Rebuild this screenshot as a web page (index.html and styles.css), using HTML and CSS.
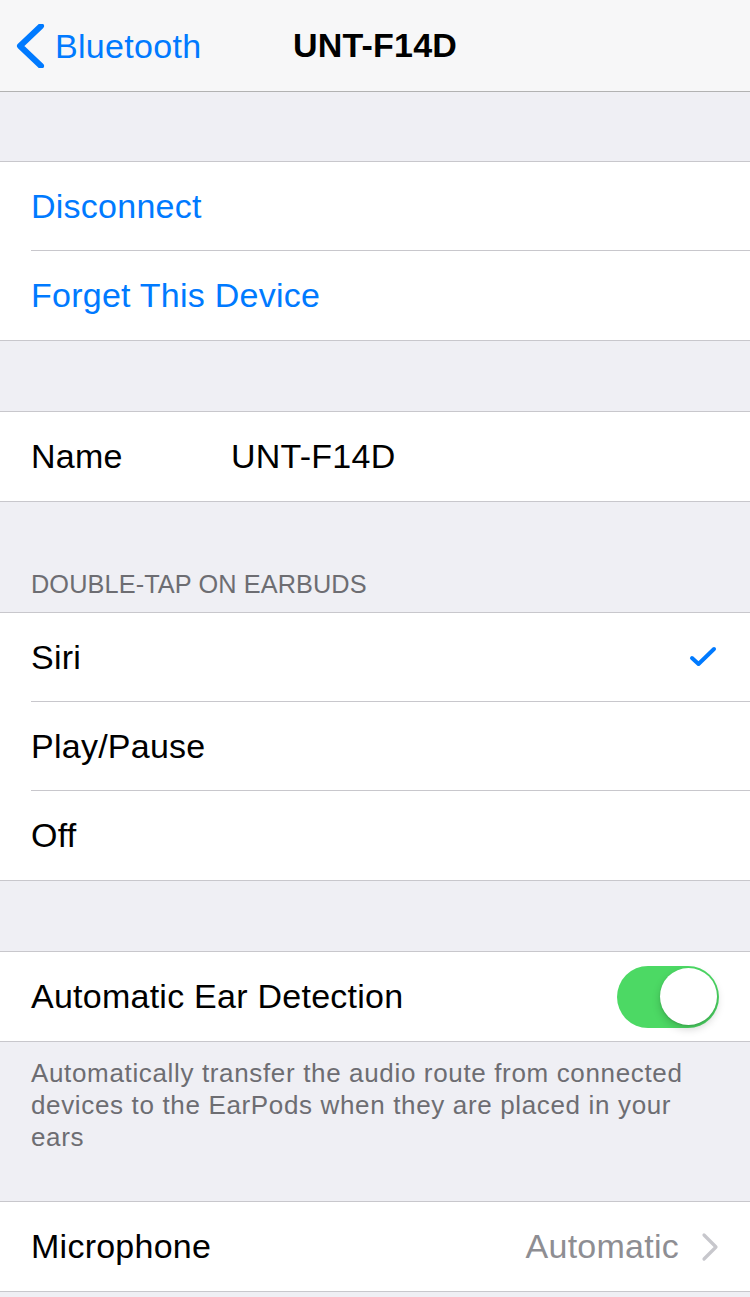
FILE: index.html
```html
<!DOCTYPE html>
<html>
<head>
<meta charset="utf-8">
<link rel="stylesheet" href="styles.css">
</head>
<body>
<header class="nav">
  <div class="nav-left">
    <svg class="back-icon" width="30" height="44" viewBox="0 0 30 44"><polyline points="26,2 5,22 26,42" fill="none" stroke="#007aff" stroke-width="6" stroke-linecap="round" stroke-linejoin="round"/></svg>
    <span class="back-label">Bluetooth</span>
  </div>
  <div class="nav-title">UNT-F14D</div>
  <div class="nav-right"></div>
</header>

<div class="gap first"></div>
<section class="group">
  <div class="row"><span class="link">Disconnect</span></div>
  <div class="row"><span class="link">Forget This Device</span></div>
</section>

<div class="gap"></div>
<section class="group">
  <div class="row"><span class="label">Name</span><span class="value-black">UNT-F14D</span></div>
</section>

<div class="section-header">DOUBLE-TAP ON EARBUDS</div>
<section class="group">
  <div class="row"><span class="grow">Siri</span>
    <svg class="check" width="28" height="24" viewBox="0 0 28 24"><polyline points="3,13 9.5,19 25,4" fill="none" stroke="#007aff" stroke-width="4" stroke-linecap="round" stroke-linejoin="round"/></svg>
  </div>
  <div class="row"><span class="grow">Play/Pause</span></div>
  <div class="row"><span class="grow">Off</span></div>
</section>

<div class="gap"></div>
<section class="group">
  <div class="row"><span class="grow">Automatic Ear Detection</span>
    <div class="toggle"><div class="knob"></div></div>
  </div>
</section>
<div class="footer">Automatically transfer the audio route from connected<br>devices to the EarPods when they are placed in your<br>ears</div>

<section class="group">
  <div class="row"><span class="grow">Microphone</span><span class="detail">Automatic</span>
    <svg class="chev" width="18" height="30" viewBox="0 0 18 30"><polyline points="3,3 15,15 3,27" fill="none" stroke="#c7c7cc" stroke-width="3.2" stroke-linecap="round" stroke-linejoin="round"/></svg>
  </div>
</section>
</body>
</html>
```
FILE: styles.css
```css
html, body {
  margin: 0;
  padding: 0;
}
body {
  background: #efeff4;
  font-family: "Liberation Sans", Arial, Helvetica, sans-serif;
  color: #000;
  width: 750px;
  min-height: 1297px;
}
.nav {
  height: 92px;
  background: #f7f7f8;
  border-bottom: 1px solid #b2b2b2;
  display: grid;
  grid-template-columns: 1fr auto 1fr;
  align-items: center;
  box-sizing: border-box;
}
.nav-left {
  display: flex;
  align-items: center;
  padding-left: 15px;
  color: #007aff;
  font-size: 34px;
  letter-spacing: 0.3px;
}
.back-icon {
  display: block;
  margin-right: 10px;
}
.back-label {
  line-height: 40px;
}
.nav-title {
  font-size: 34px;
  font-weight: bold;
  letter-spacing: 0.2px;
}
.gap {
  height: 70px;
}
.gap.first {
  height: 69px;
}
.group {
  background: #fff;
  border-top: 1px solid #c8c7cc;
  border-bottom: 1px solid #c8c7cc;
}
.row {
  margin-left: 31px;
  padding-right: 31px;
  height: 89px;
  box-sizing: border-box;
  display: flex;
  align-items: center;
  font-size: 34px;
  letter-spacing: 0.25px;
  border-bottom: 1px solid #c8c7cc;
}
.row:last-child {
  border-bottom: none;
  height: 89px;
}
.link {
  color: #007aff;
}
.label {
  width: 200px;
}
.grow {
  flex: 1;
}
.section-header {
  padding: 66px 31px 12px;
  font-size: 25.3px;
  line-height: 32px;
  color: #6d6d72;
  letter-spacing: 0.1px;
}
.check {
  display: block;
  margin-right: 2px;
}
.toggle {
  width: 102px;
  height: 62px;
  border-radius: 31px;
  background: #4cd964;
  display: flex;
  align-items: center;
  justify-content: flex-end;
  padding: 0 2px;
  box-sizing: border-box;
}
.knob {
  width: 57px;
  height: 57px;
  border-radius: 50%;
  background: #fff;
  box-shadow: 0 4px 8px rgba(0,0,0,0.18), 0 1px 2px rgba(0,0,0,0.12);
}
.footer {
  padding: 15px 31px 48px;
  font-size: 26px;
  line-height: 32px;
  color: #6d6d72;
  letter-spacing: 0.65px;
}
.detail {
  color: #8e8e93;
  margin-right: 22px;
}
.chev {
  display: block;
}
```
